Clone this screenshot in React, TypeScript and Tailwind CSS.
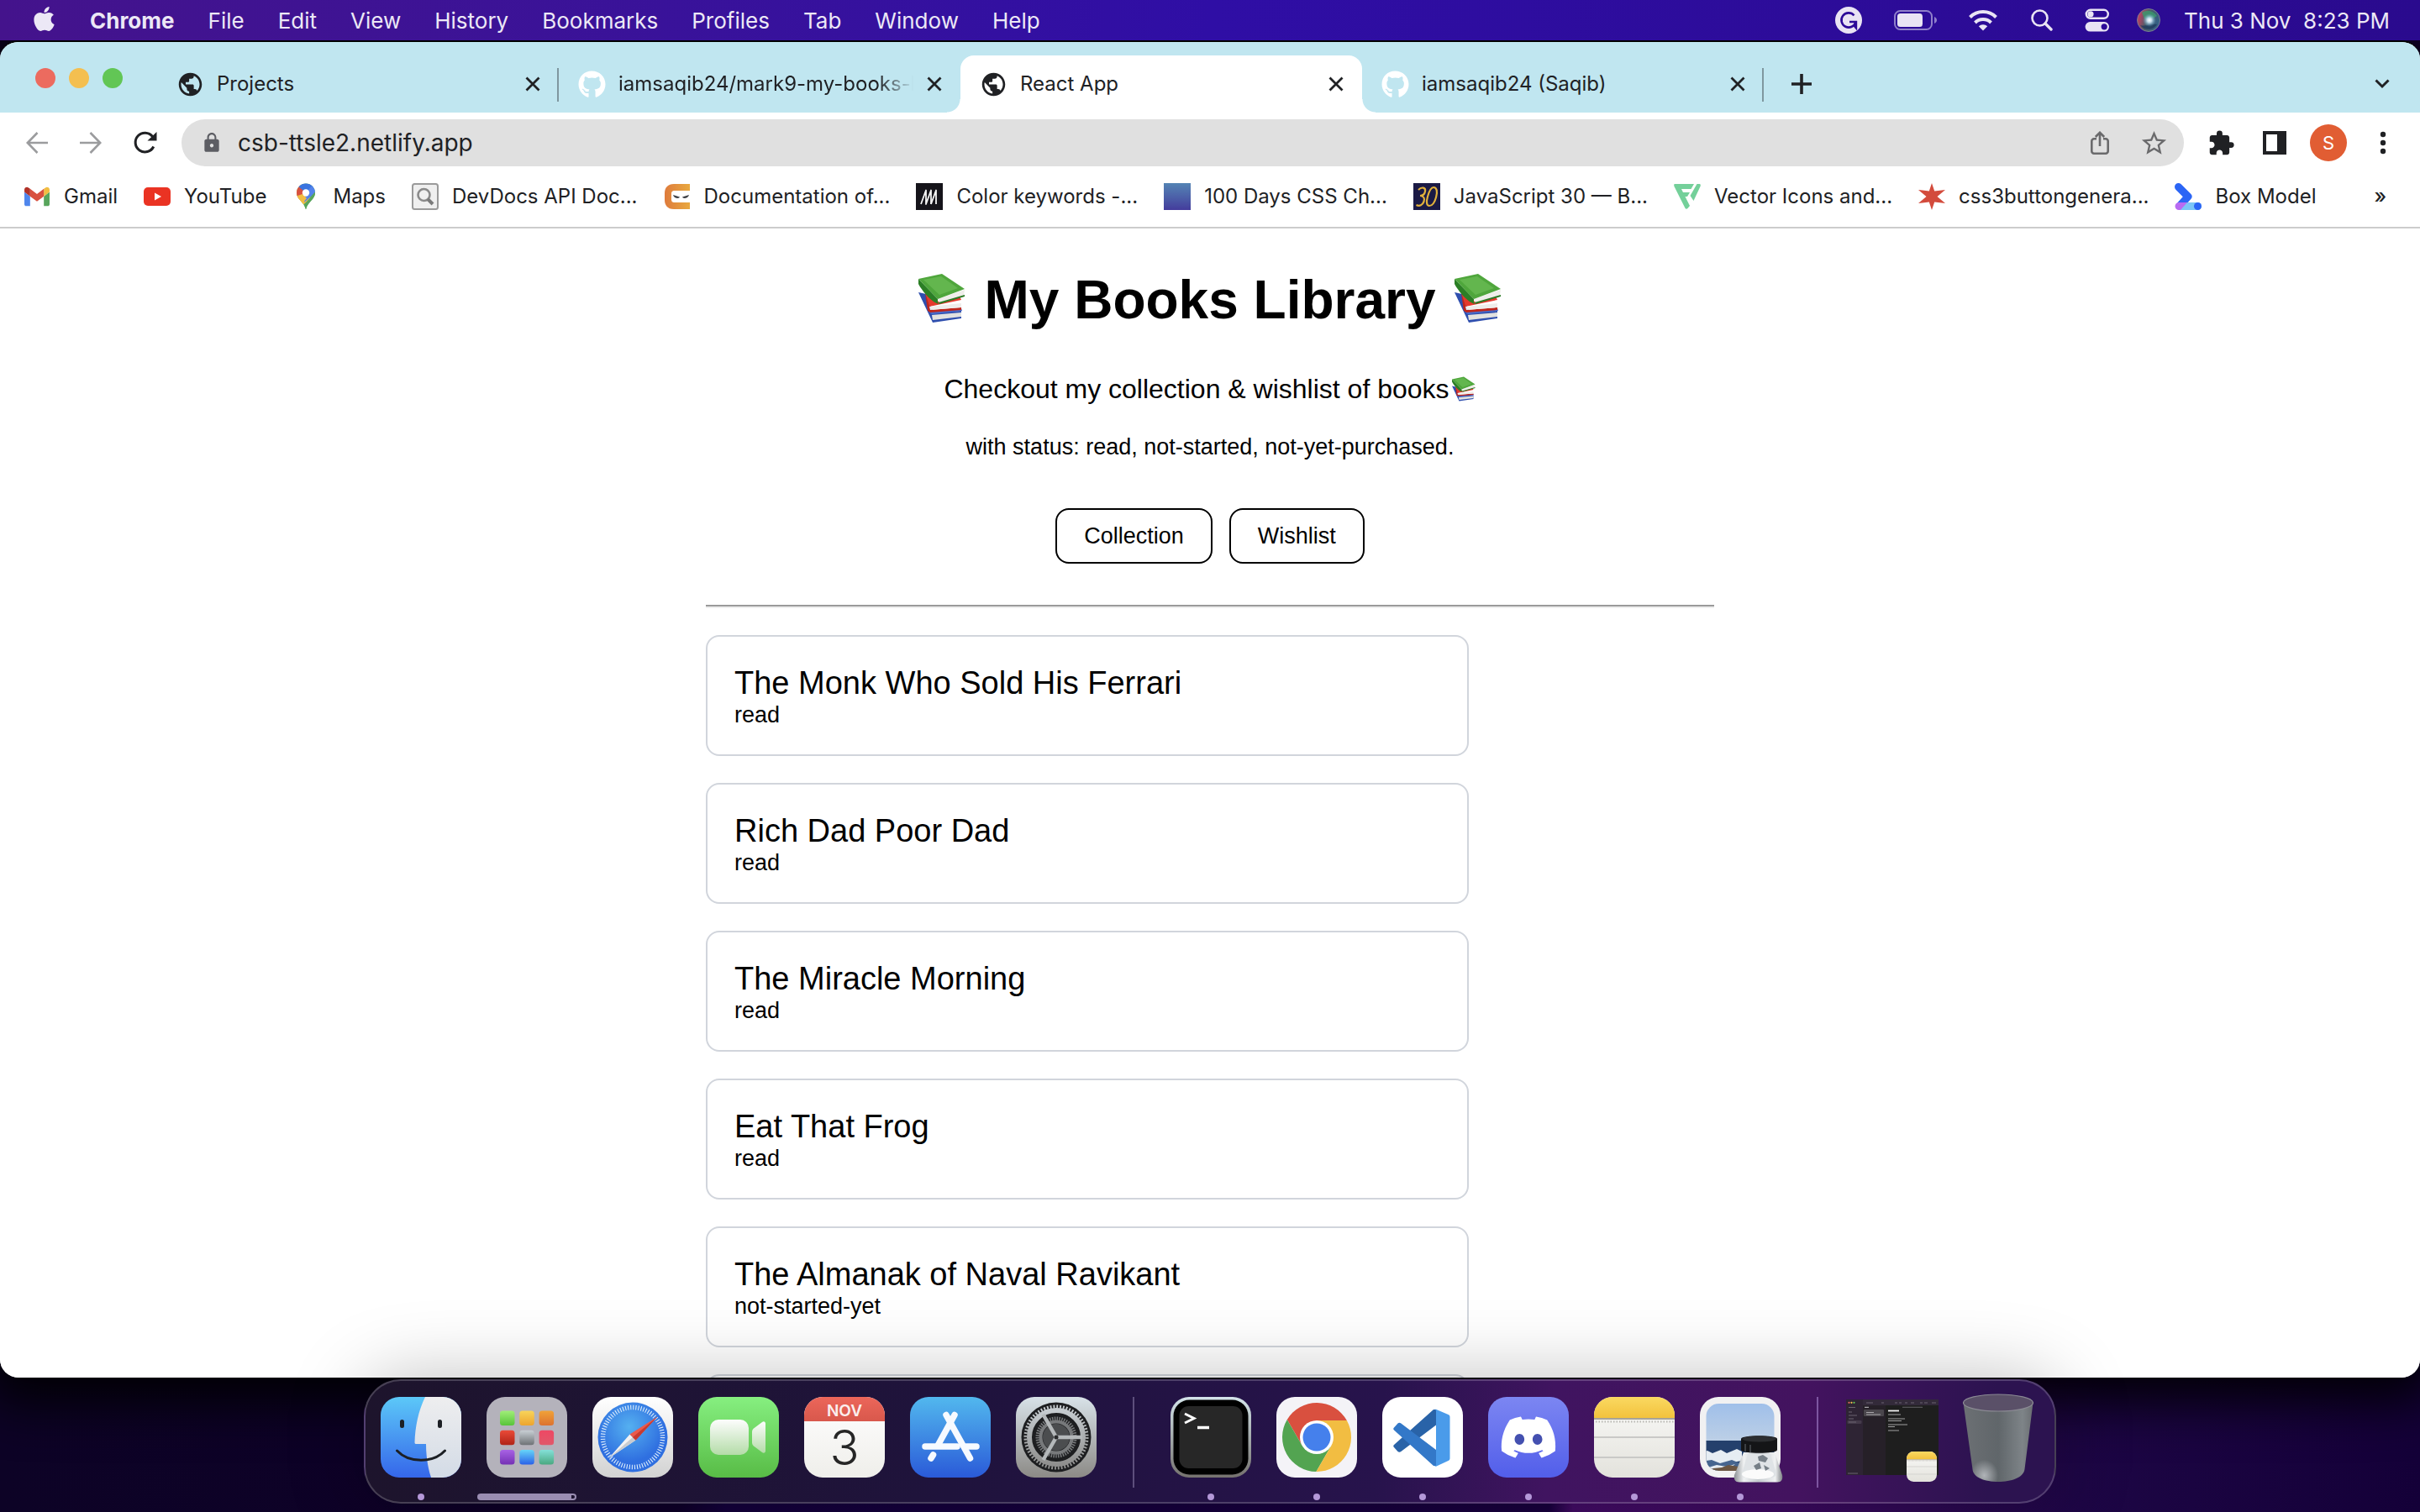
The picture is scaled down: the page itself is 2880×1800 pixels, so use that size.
import React from "react";
import { FaApple, FaDiscord, FaGithub } from "react-icons/fa";
import { MdExtension, MdLock, MdPublic, MdStarBorder } from "react-icons/md";

/* ---------- Menu bar ---------- */

const MENUS = ["File", "Edit", "View", "History", "Bookmarks", "Profiles", "Tab", "Window", "Help"];

function MenuBar() {
  return (
    <header className="relative z-10 flex h-12 shrink-0 items-center justify-between bg-linear-to-r from-[#44138c] via-[#2f0ea5] to-[#2a0a8e] pr-9 pl-10 text-[26px] text-[#ece8f6]">
      <nav aria-label="Application menu" className="flex items-center gap-10">
        <button aria-label="Apple menu" className="-ml-1 -mr-0.5 mb-1">
          <FaApple size={33} />
        </button>
        <button className="font-bold">Chrome</button>
        {MENUS.map((m) => (
          <button key={m}>{m}</button>
        ))}
      </nav>
      <div className="flex items-center">
        <svg width="32" height="32" viewBox="0 0 32 32" className="mr-[38px]">
          <circle cx="16" cy="16" r="16" fill="#e9e4f4" />
          <path d="M22.500 10.300A8.600 8.600 0 1 0 24.400 18" fill="none" stroke="#2c0b98" strokeWidth="2.600" />
          <path d="M17 18h8v7.500l-2.600-3" fill="none" stroke="#2c0b98" strokeWidth="2.400" />
        </svg>
        <svg width="52" height="24" viewBox="0 0 52 24" className="mr-9">
          <rect x="1" y="1" width="44" height="22" rx="6.500" fill="none" stroke="#8f7fca" strokeWidth="2" />
          <rect x="4" y="4" width="30" height="16" rx="3.500" fill="#e9e4f4" />
          <path d="M48 8c4 1.500 4 6.500 0 8z" fill="#8f7fca" />
        </svg>
        <svg width="36" height="26" viewBox="0 0 36 26" className="mr-[39px]" fill="none" stroke="#e9e4f4" strokeWidth="4">
          <path d="M2.500 9.500a22 22 0 0 1 31 0" />
          <path d="M8.500 16a13.500 13.500 0 0 1 19 0" />
          <path d="M18 25.500l-5.200-5.200a7.500 7.500 0 0 1 10.400 0z" fill="#e9e4f4" stroke="none" />
        </svg>
        <svg width="26" height="26" viewBox="0 0 26 26" className="mr-[38px]" fill="none" stroke="#e9e4f4">
          <circle cx="10.500" cy="10.500" r="9" strokeWidth="2.600" />
          <path d="M17 17l7 7" strokeWidth="3.400" strokeLinecap="round" />
        </svg>
        <svg width="30" height="28" viewBox="0 0 30 28" className="mr-8">
          <rect x="1.800" y="1.800" width="26" height="10" rx="5" fill="none" stroke="#e9e4f4" strokeWidth="2.400" />
          <circle cx="7" cy="6.800" r="3.600" fill="#e9e4f4" />
          <rect x=".6" y="16" width="28.400" height="11.600" rx="5.800" fill="#e9e4f4" />
          <circle cx="23.200" cy="21.800" r="3.600" fill="#2c0b98" />
        </svg>
        <svg width="28" height="28" viewBox="0 0 28 28" className="mr-7">
          <defs>
            <radialGradient id="siriCore">
              <stop offset="0" stopColor="#ffffff" />
              <stop offset=".35" stopColor="#cfe6f5" stopOpacity=".9" />
              <stop offset="1" stopColor="#5aa0c8" stopOpacity="0" />
            </radialGradient>
            <linearGradient id="siriBase" x1="0" x2="1" y1=".3" y2=".6">
              <stop offset="0" stopColor="#d43a63" />
              <stop offset=".45" stopColor="#4b5d66" />
              <stop offset="1" stopColor="#2f5f8a" />
            </linearGradient>
          </defs>
          <circle cx="14" cy="14" r="13.500" fill="url(#siriBase)" stroke="#7a7f90" />
          <path d="M6 5c6-4 13-3 18 4-5 4-12 5-15 3z" fill="#3b9a6d" opacity=".8" />
          <path d="M4 20c6 2 13-2 20-1-3 6-14 9-20 1z" fill="#1f3a5c" opacity=".8" />
          <circle cx="15" cy="14" r="8" fill="url(#siriCore)" />
        </svg>
        <time className="whitespace-pre">Thu 3 Nov  8:23 PM</time>
      </div>
    </header>
  );
}

/* ---------- Tab strip ---------- */

function Cross() {
  return (
    <svg width="18" height="18" viewBox="0 0 18 18" stroke="#202124" strokeWidth="2.800">
      <path d="M1.500 1.500l15 15M16.500 1.500l-15 15" />
    </svg>
  );
}

type TabProps = { title: string; icon: "globe" | "github"; active?: boolean; fade?: boolean; divider?: boolean };

function Tab({ title, icon, active, fade, divider }: TabProps) {
  return (
    <div
      className={
        active
          ? "relative flex h-[68px] min-w-0 max-w-[478px] flex-1 items-center rounded-t-2xl bg-white pr-[22px] pl-[23px]"
          : "relative flex h-[68px] min-w-0 max-w-[478px] flex-1 items-center pr-[22px] pl-[23px]"
      }
    >
      {active && (
        <>
          <span className="absolute bottom-0 -left-4 size-4 bg-radial-[at_0%_0%] from-[#c0e6f0] from-[15px] to-white to-[16px]" />
          <span className="absolute -right-4 bottom-0 size-4 bg-radial-[at_100%_0%] from-[#c0e6f0] from-[15px] to-white to-[16px]" />
        </>
      )}
      <button className="flex min-w-0 flex-1 items-center gap-[15px] text-left">
        <span className="shrink-0">
          {icon === "globe" ? <MdPublic size={33} color="#202124" /> : <FaGithub size={33} color="#ffffff" />}
        </span>
        <span
          className={
            fade
              ? "flex-1 overflow-hidden whitespace-nowrap mask-r-from-88% mask-r-to-100%"
              : "flex-1 overflow-hidden whitespace-nowrap"
          }
        >
          {title}
        </span>
      </button>
      <button aria-label={`Close ${title}`} className="ml-4 shrink-0">
        <Cross />
      </button>
      {divider && <span className="absolute top-[15px] right-0 h-10 w-0.5 bg-[#7f979f]" />}
    </div>
  );
}

function TabStrip() {
  return (
    <div className="flex h-[84px] shrink-0 items-end bg-[#c0e6f0] pl-[42px] text-[24px] text-[#202124]">
      <div className="mb-[29px] flex gap-4 pr-[41px]">
        <button aria-label="Close window" className="size-6 rounded-full bg-[#ec6b5f]" />
        <button aria-label="Minimize window" className="size-6 rounded-full bg-[#f4bf50]" />
        <button aria-label="Zoom window" className="size-6 rounded-full bg-[#62c655]" />
      </div>
      <Tab title="Projects" icon="globe" divider />
      <Tab title="iamsaqib24/mark9-my-books-l" icon="github" fade />
      <Tab title="React App" icon="globe" active />
      <Tab title="iamsaqib24 (Saqib)" icon="github" divider />
      <button aria-label="New tab" className="mb-[22px] ml-[33px]">
        <svg width="24" height="24" viewBox="0 0 24 24" stroke="#202124" strokeWidth="3.600">
          <path d="M12 0v24M0 12h24" />
        </svg>
      </button>
      <button aria-label="Search tabs" className="mr-9 mb-7 ml-auto">
        <svg width="18" height="12" viewBox="0 0 18 12" fill="none" stroke="#202124" strokeWidth="3">
          <path d="M1.500 1.500L9 9l7.500-7.500" />
        </svg>
      </button>
    </div>
  );
}

/* ---------- Toolbar ---------- */

function Toolbar() {
  return (
    <div className="flex h-[72px] shrink-0 items-center pr-8 pl-[31px]">
      <button aria-label="Back">
        <svg width="26" height="26" viewBox="0 0 26 26" fill="none" stroke="#9b9c9e" strokeWidth="2.600">
          <path d="M26 13H2M13.500 1L1.800 13l11.700 12" />
        </svg>
      </button>
      <button aria-label="Forward" className="ml-[38px]">
        <svg width="26" height="26" viewBox="0 0 26 26" fill="none" stroke="#9b9c9e" strokeWidth="2.600">
          <path d="M0 13h24M12.500 1l11.700 12-11.700 12" />
        </svg>
      </button>
      <button aria-label="Reload" className="mr-[29px] ml-[38px]">
        <svg width="28" height="28" viewBox="0 0 28 28">
          <path d="M23.800 18.500A11.400 11.400 0 1 1 22.500 6.500" fill="none" stroke="#202124" strokeWidth="3" />
          <path d="M27.500 1v10.500H16.500z" fill="#202124" />
        </svg>
      </button>
      <div className="flex h-14 flex-1 items-center rounded-full bg-[#e0e0e0] pr-[18px] pl-[23px]">
        <MdLock size={26} color="#5c5d63" />
        <input
          aria-label="Address and search bar"
          defaultValue="csb-ttsle2.netlify.app"
          className="ml-[18px] min-w-0 flex-1 bg-transparent text-[28px] text-[#202124] outline-none"
        />
        <button aria-label="Share">
          <svg width="22" height="28" viewBox="0 0 22 28" fill="none" stroke="#6a6a6c" strokeWidth="2.600">
            <path d="M7 9.300H4A2.700 2.700 0 0 0 1.300 12v12A2.700 2.700 0 0 0 4 26.700h14a2.700 2.700 0 0 0 2.700-2.700V12A2.700 2.700 0 0 0 18 9.300h-3M11 18V2M5.800 7L11 1.800 16.200 7" />
          </svg>
        </button>
        <button aria-label="Bookmark this page" className="ml-9">
          <MdStarBorder size={35} color="#6a6a6c" />
        </button>
      </div>
      <button aria-label="Extensions" className="ml-7">
        <MdExtension size={33} color="#202124" />
      </button>
      <button aria-label="Side panel" className="ml-[33px]">
        <svg width="28" height="28" viewBox="0 0 28 28">
          <path d="M0 0h28v28H0zM4 4v20h13V4z" fill="#202124" fillRule="evenodd" />
        </svg>
      </button>
      <button aria-label="Profile" className="ml-7 size-11 rounded-full bg-[#e15d33] text-[22px] text-white">
        S
      </button>
      <button aria-label="More options" className="ml-[31px]">
        <svg width="24" height="28" viewBox="0 0 24 28" fill="#202124">
          <circle cx="12" cy="4" r="3.200" />
          <circle cx="12" cy="14" r="3.200" />
          <circle cx="12" cy="24" r="3.200" />
        </svg>
      </button>
    </div>
  );
}

/* ---------- Bookmarks ---------- */

const ICON = "size-8 shrink-0";

function GmailIcon() {
  return (
    <svg viewBox="49 31 94 88" className={ICON}>
      <path fill="#4f86ec" d="M58 108h14V74L52 59v43c0 3.320 2.690 6 6 6" />
      <path fill="#58a55c" d="M120 108h14c3.320 0 6-2.690 6-6V59l-20 15" />
      <path fill="#f1bd42" d="M120 48v26l20-15v-8c0-7.420-8.470-11.650-14.400-7.200" />
      <path fill="#d85140" d="M72 74V48l24 18 24-18v26L96 92" />
      <path fill="#b13228" d="M52 51v8l20 15V48l-5.600-4.200c-5.940-4.450-14.400-.22-14.400 7.200" />
    </svg>
  );
}

function YouTubeIcon() {
  return (
    <svg viewBox="0 0 32 32" className={ICON}>
      <rect y="5" width="32" height="22" rx="5" fill="#ea3323" />
      <path d="M13 11.500l8 4.500-8 4.500z" fill="#fff" />
    </svg>
  );
}

function MapsIcon() {
  return (
    <svg viewBox="0 0 32 32" className={ICON}>
      <defs>
        <clipPath id="pin">
          <path d="M16 .5A11 11 0 0 0 5 11.500c0 8 8.500 10 11 20 2.500-10 11-12 11-20A11 11 0 0 0 16 .5z" />
        </clipPath>
      </defs>
      <g clipPath="url(#pin)">
        <rect width="32" height="32" fill="#58a55c" />
        <path d="M16 11.500L3 25V8h6z" fill="#f1bd42" />
        <path d="M3 22l13-10.500L23 18l-12 9z" fill="#f1bd42" />
        <path d="M16 11.500L5 20V0l5 3z" fill="#d85140" />
        <path d="M16 11.500L6 3V0h22v2z" fill="#3a74e0" />
        <path d="M16 11.500L24 2l4 0v9l-14 12z" fill="#5383ec" />
        <path d="M28 9L11 29l8 3 12-12z" fill="#58a55c" />
        <path d="M6 15l6-2 5 5-6 7-6-5z" fill="#f1bd42" />
      </g>
      <circle cx="16" cy="11.500" r="4.200" fill="#fff" />
    </svg>
  );
}

function DevDocsIcon() {
  return (
    <svg viewBox="0 0 32 32" className={ICON}>
      <rect x="1" y="1" width="30" height="30" rx="2.500" fill="#efefef" stroke="#9a9a9a" strokeWidth="2" />
      <circle cx="14.500" cy="14" r="7" fill="none" stroke="#8a8a8a" strokeWidth="2.600" />
      <path d="M19 19l6 6" stroke="#7a7a7a" strokeWidth="4" />
    </svg>
  );
}

function NinjaIcon() {
  return (
    <svg viewBox="0 0 32 32" className={ICON}>
      <defs>
        <linearGradient id="ninja">
          <stop offset="0" stopColor="#de7b3c" />
          <stop offset="1" stopColor="#e9a93f" />
        </linearGradient>
      </defs>
      <path d="M31 1v30H12C4 31 1 26 1 20v-8C1 5 5 1 12 1z" fill="url(#ninja)" />
      <path d="M32 9v14H13c-3 0-4-1-4-4v-6c0-3 1-4 4-4z" fill="#fff" />
      <path d="M11 14l8 2.500c-1 2.500-7 2-8-2.500zM30 14l-8 2.500c1 2.500 7 2 8-2.500z" fill="#3f4247" />
    </svg>
  );
}

function MdnIcon() {
  return (
    <svg viewBox="0 0 32 32" className={ICON}>
      <rect width="32" height="32" fill="#15141a" />
      <path d="M6 25L12 8.500V25L18 8.500V25" fill="none" stroke="#f4f4f4" strokeWidth="1.800" strokeLinejoin="round" />
      <path d="M18 25l6-16.500V25" fill="none" stroke="#f4f4f4" strokeWidth="1.800" strokeLinejoin="round" />
    </svg>
  );
}

function ThirtyIcon() {
  return (
    <svg viewBox="0 0 32 32" className={ICON}>
      <rect width="32" height="32" fill="#1b1a45" />
      <path d="M6 8c4-4 9-3 8 2-.6 3-3 5-6 5 4 0 6 3 4.500 7-1.500 4-5 6-9 4" fill="none" stroke="#e3b23c" strokeWidth="2.200" />
      <path d="M24 5c4 0 5 5 3 12s-5 10-8 10-4-4-2-11 4-11 7-11z" fill="none" stroke="#e3b23c" strokeWidth="2.200" />
    </svg>
  );
}

function FlatIcon() {
  return (
    <svg viewBox="0 0 32 32" className={ICON} fill="#74d09a">
      <path d="M1 1h23l-3.500 6H9l2 4h8l-3 5h-2.500l5.500 11-2.500 3c-1 1-2.500 1-3.200-.5L.5 4C0 2.500 0 1 1 1z" />
      <path d="M27.500 1h3c1.500 0 1.500 1.500 1 3l-8 17-4-6z" />
    </svg>
  );
}

function SparkIcon() {
  return (
    <svg viewBox="0 0 32 32" className={ICON}>
      <path d="M16 0l3.200 9.500L32 8l-9.500 8L32 24l-12.800-1.500L16 32l-3.200-9.500L0 24l9.500-8L0 8l12.800 1.500z" fill="#d34b3c" />
    </svg>
  );
}

function BoxIcon() {
  return (
    <svg viewBox="0 0 32 32" className={ICON} fill="none" strokeLinecap="round">
      <path d="M4.500 4.500L16 16 7 26" stroke="#2b65f5" strokeWidth="9" strokeLinejoin="round" />
      <path d="M5 23h22.500a4.500 4.500 0 0 1 0 9H5z" fill="#7cc6f7" />
      <path d="M.5 27.500A4.500 4.500 0 0 1 5 23h10L7 32H5a4.500 4.500 0 0 1-4.500-4.500z" fill="#b86bf2" />
      <circle cx="27.500" cy="27.500" r="4.500" fill="#2b65f5" />
    </svg>
  );
}

const BOOKMARKS: [string, React.ReactNode][] = [
  ["Gmail", <GmailIcon />],
  ["YouTube", <YouTubeIcon />],
  ["Maps", <MapsIcon />],
  ["DevDocs API Doc...", <DevDocsIcon />],
  ["Documentation of...", <NinjaIcon />],
  ["Color keywords -...", <MdnIcon />],
  ["100 Days CSS Ch...", <span className="size-8 shrink-0 bg-linear-to-b from-[#5484b4] to-[#443c9c]" />],
  ["JavaScript 30 — B...", <ThirtyIcon />],
  ["Vector Icons and...", <FlatIcon />],
  ["css3buttongenera...", <SparkIcon />],
  ["Box Model", <BoxIcon />],
];

function BookmarksBar() {
  return (
    <nav
      aria-label="Bookmarks"
      className="flex h-[66px] shrink-0 items-start justify-between border-b-2 border-[#cccccc] px-7 pt-2.5 text-[24px] text-[#202124]"
    >
      <div className="flex items-center gap-[31px]">
        {BOOKMARKS.map(([label, icon]) => (
          <a key={label} href="#" className="flex items-center gap-4 whitespace-nowrap">
            {icon}
            {label}
          </a>
        ))}
      </div>
      <button aria-label="More bookmarks" className="mr-3 font-medium">
        »
      </button>
    </nav>
  );
}

/* ---------- Page ---------- */

function Books({ className }: { className: string }) {
  return (
    <svg viewBox="0 0 60 60" className={className} role="img" aria-label="books">
      <path d="M2 23l9 2 9 22 33-2v9l-34 5z" fill="#2f4fae" />
      <path d="M18 50l35-3v5l-34 4z" fill="#e2e2e0" />
      <path d="M14 46l39-4 1 3-36 4z" fill="#4a6ccc" />
      <path d="M10 24l16 10 25-6 2 4-38 8z" fill="#e5392d" />
      <path d="M10 24l3 21 3 2 37-3v-3l-37 3-1-5z" fill="#bf261b" />
      <path d="M15 40l38-4v5l-37 3z" fill="#eeedea" />
      <path d="M25 31l32-11-1 7-29 9z" fill="#efeeea" />
      <path d="M26 35l31-9v2l-30 9z" fill="#2b7a24" />
      <path d="M2 7L30 1l27 18-32 12z" fill="#4fa63c" />
      <path d="M2 7l23 24v3l1 3C16 34 5 19 2 13z" fill="#2b7f25" />
      <path d="M8 8l21-4 20 14-22 8z" fill="#63b64e" />
    </svg>
  );
}

const LIBRARY = [
  { title: "The Monk Who Sold His Ferrari", status: "read" },
  { title: "Rich Dad Poor Dad", status: "read" },
  { title: "The Miracle Morning", status: "read" },
  { title: "Eat That Frog", status: "read" },
  { title: "The Almanak of Naval Ravikant", status: "not-started-yet" },
];

function LibraryPage() {
  return (
    <main className="min-h-0 flex-1 overflow-hidden bg-white pt-12 font-['Liberation_Sans',Arial,sans-serif] text-black">
      <div className="mx-auto max-w-[1200px]">
        <h1 className="flex items-center justify-center gap-5 text-[64px] leading-[74px] font-bold">
          <Books className="-mt-1 size-[60px]" />
          My Books Library
          <Books className="-mt-1 size-[60px]" />
        </h1>
        <p className="mt-[51px] flex items-center justify-center gap-0.5 text-[32px] leading-9">
          Checkout my collection &amp; wishlist of books
          <Books className="size-[30px]" />
        </p>
        <p className="mt-9 text-center text-[27px] leading-[30px]">with status: read, not-started, not-yet-purchased.</p>
        <div className="mt-[58px] flex justify-center gap-5 text-[27px] leading-[30px]">
          <button className="rounded-2xl border-2 border-black px-8 py-4">Collection</button>
          <button className="rounded-2xl border-2 border-black px-8 py-4">Wishlist</button>
        </div>
        <hr className="mt-[49px] border-t-2 border-b-2 border-t-[#9a9a9a] border-b-[#eeeeee]" />
        <ul className="mt-8 flex max-w-[908px] flex-col gap-8">
          {LIBRARY.map((b) => (
            <li key={b.title} className="rounded-2xl border-2 border-gray-300 p-8">
              <div className="text-[38px] leading-[46px]">{b.title}</div>
              <div className="text-[27px] leading-[30px]">{b.status}</div>
            </li>
          ))}
          <li className="h-36 rounded-2xl border-2 border-gray-300" />
        </ul>
      </div>
    </main>
  );
}

/* ---------- Dock ---------- */

const TILE = "block size-24 overflow-visible";

function Grad({ id, from, to }: { id: string; from: string; to: string }) {
  return (
    <linearGradient id={id} x1="0" y1="0" x2="0" y2="1">
      <stop offset="0" stopColor={from} />
      <stop offset="1" stopColor={to} />
    </linearGradient>
  );
}

function Finder() {
  return (
    <svg viewBox="0 0 96 96" className={TILE}>
      <defs>
        <Grad id="fnB" from="#5cc8f8" to="#3566ea" />
        <Grad id="fnW" from="#eeeeef" to="#d3dbe6" />
        <clipPath id="fnC">
          <rect width="96" height="96" rx="22" />
        </clipPath>
      </defs>
      <g clipPath="url(#fnC)">
        <rect width="96" height="96" fill="url(#fnB)" />
        <path d="M53 0C45 16 41 36 40.500 54c0 1.500.5 2 2 2H54c0 14 2 28 6 40h36V0z" fill="url(#fnW)" />
      </g>
      <g stroke="#1c1f24" strokeLinecap="round" fill="none">
        <path d="M25.500 29.500v5M70.500 29.500v5" strokeWidth="5" />
        <path d="M19.500 64c14 15 43 15 57 0" strokeWidth="3" />
      </g>
    </svg>
  );
}

const PADS: [string, string][] = [
  ["#a0ee78", "#58c43a"],
  ["#f8d45a", "#eda42e"],
  ["#f0a238", "#dc7230"],
  ["#ea4a38", "#b02418"],
  ["#c8cfd4", "#6e7276"],
  ["#ee4864", "#e0586a"],
  ["#a862e4", "#7430b4"],
  ["#66d4f8", "#2a60e8"],
  ["#84e0d8", "#4aa880"],
];

function Launchpad() {
  return (
    <svg viewBox="0 0 96 96" className={TILE}>
      <rect width="96" height="96" rx="22" fill="#b4b2bb" />
      {PADS.map(([from, to], i) => (
        <g key={from}>
          <defs>
            <Grad id={`pad${i}`} from={from} to={to} />
          </defs>
          <rect x={16 + (i % 3) * 23.3} y={16.5 + Math.floor(i / 3) * 23.3} width="17.500" height="17.500" rx="3.500" fill={`url(#pad${i})`} />
        </g>
      ))}
    </svg>
  );
}

function Safari() {
  return (
    <svg viewBox="0 0 96 96" className={TILE}>
      <defs>
        <Grad id="sfW" from="#ffffff" to="#d2d2d2" />
        <radialGradient id="sfB" cx=".45" cy=".35">
          <stop offset="0" stopColor="#55b0f0" />
          <stop offset="1" stopColor="#2f6fe0" />
        </radialGradient>
      </defs>
      <rect width="96" height="96" rx="22" fill="url(#sfW)" />
      <circle cx="48" cy="48" r="41.500" fill="url(#sfB)" />
      <circle cx="48" cy="48" r="35.500" fill="none" stroke="#dcecfb" strokeWidth="5.500" strokeDasharray="1.100 1.998" />
      <path d="M19.500 73L44.500 44.500l7 7z" fill="#f3f3f3" />
      <path d="M19.500 73l28.500-25 3.500 3.500z" fill="#c9ccd0" />
      <path d="M77.500 23.500L51.500 51.500l-7-7z" fill="#ea5a4c" />
      <path d="M77.500 23.500L51.500 51.500 48 48z" fill="#c73a30" />
    </svg>
  );
}

function FaceTime() {
  return (
    <svg viewBox="0 0 96 96" className={TILE}>
      <defs>
        <Grad id="ftB" from="#86ef80" to="#58bc46" />
        <Grad id="ftW" from="#fdfdfd" to="#b4dca8" />
      </defs>
      <rect width="96" height="96" rx="22" fill="url(#ftB)" />
      <rect x="14" y="27" width="46" height="42" rx="10" fill="url(#ftW)" />
      <path d="M64 42c0-2 .5-3 2-4.500l10-7.500c2-1.500 4-.5 4 2v32c0 2.500-2 3.500-4 2l-10-7.500c-1.500-1.500-2-2.500-2-4.500z" fill="url(#ftW)" />
    </svg>
  );
}

function Calendar() {
  return (
    <svg viewBox="0 0 96 96" className={TILE}>
      <defs>
        <Grad id="clR" from="#ec665a" to="#d8584c" />
        <Grad id="clW" from="#ffffff" to="#efeeea" />
        <clipPath id="clC">
          <rect width="96" height="96" rx="22" />
        </clipPath>
      </defs>
      <g clipPath="url(#clC)">
        <rect width="96" height="96" fill="url(#clW)" />
        <rect width="96" height="29" fill="url(#clR)" />
      </g>
      <text x="48" y="23" textAnchor="middle" fontSize="19" fontWeight="600" fill="#fbeeed">
        NOV
      </text>
      <text x="48" y="81" textAnchor="middle" fontSize="58" fontWeight="300" fill="#262626">
        3
      </text>
    </svg>
  );
}

function AppStore() {
  return (
    <svg viewBox="0 0 96 96" className={TILE}>
      <defs>
        <Grad id="asB" from="#52b8ee" to="#2a5ad8" />
      </defs>
      <rect width="96" height="96" rx="22" fill="url(#asB)" />
      <g stroke="#f6faff" strokeWidth="7.500" strokeLinecap="round">
        <path d="M43 21.500L71.500 73" />
        <path d="M53 21.500L33.500 57" />
        <path d="M18 59h38M67 59h12" />
        <path d="M27.500 69L25 73" />
      </g>
    </svg>
  );
}

function Settings() {
  return (
    <svg viewBox="0 0 96 96" className={TILE}>
      <defs>
        <Grad id="stB" from="#d8e2e8" to="#8c8a86" />
        <Grad id="stM" from="#c6ccd0" to="#8f8f8e" />
      </defs>
      <rect width="96" height="96" rx="22" fill="url(#stB)" />
      <circle cx="48" cy="48" r="41.500" fill="#1d1e20" />
      <g fill="none" stroke="url(#stM)">
        <circle cx="48" cy="48" r="36.500" strokeWidth="4" strokeDasharray="1.900 1.922" />
        <circle cx="48" cy="48" r="32" strokeWidth="6" />
        <circle cx="48" cy="48" r="22" strokeWidth="5" stroke="#77797b" strokeDasharray="1.500 1.300" />
        <circle cx="48" cy="48" r="18.500" strokeWidth="4" stroke="#77797b" />
      </g>
      <circle cx="48" cy="48" r="16" fill="#4b4d4f" />
      <g stroke="#b4b8ba" strokeWidth="4.500">
        <path d="M48 48h31M48 48L32.500 21M48 48L32.500 75" />
      </g>
      <circle cx="48" cy="48" r="2.500" fill="#2a2b2d" />
    </svg>
  );
}

function Terminal() {
  return (
    <svg viewBox="0 0 96 96" className={TILE}>
      <defs>
        <Grad id="tmB" from="#d4e4ea" to="#75726e" />
      </defs>
      <rect width="96" height="96" rx="22" fill="url(#tmB)" />
      <rect x="3.500" y="3.500" width="89" height="89" rx="19" fill="#000" />
      <rect x="10.500" y="11" width="75" height="74" rx="11" fill="#272727" />
      <path d="M17 20l11 5.500L17 31" fill="none" stroke="#fff" strokeWidth="3" />
      <path d="M32 36.500h14" stroke="#fff" strokeWidth="3.500" />
    </svg>
  );
}

function Chrome() {
  return (
    <svg viewBox="0 0 96 96" className={TILE}>
      <rect width="96" height="96" rx="22" fill="#f4f3f7" />
      <g transform="translate(48 48)">
        <path d="M35.800-20L0-20-17.300 10-35.200-21A41 41 0 0 1 35.800-20z" fill="#d9503f" />
        <path d="M-35.200-21L-17.300 10 17.300 10-.6 41A41 41 0 0 1-35.200-21z" fill="#53a451" />
        <path d="M-.6 41L17.300 10 0-20H35.800A41 41 0 0 1-.6 41z" fill="#f2bd42" />
        <circle r="20" fill="#fff" />
        <circle r="16.500" fill="#4580ec" />
      </g>
    </svg>
  );
}

function VSCode() {
  return (
    <svg viewBox="0 0 96 96" className={TILE}>
      <rect width="96" height="96" rx="22" fill="#fff" />
      <path d="M61 15L14 57c-1 1-1 2 0 3l4.500 5c1 1 2.500 1 3.500.3L64 33.500V15z" fill="#2963a8" />
      <path d="M61 82L14 39.500c-1-1-1-2 0-3l4.500-5c1-1 2.500-1 3.500-.3L64 63v19z" fill="#3378c8" />
      <path d="M61.500 15.500c1-1 2-1 3-.5l14 6c1.500.7 2 1.500 2 3v49c0 1.500-.5 2.300-2 3l-14 6.500c-1 .5-2 .3-3-.5 1.300.8 2.500 0 2.500-1.500V17c0-1.500-1.200-2.500-2.500-1.500z" fill="#4a9bea" />
    </svg>
  );
}

function Discord() {
  return (
    <svg viewBox="0 0 96 96" className={TILE}>
      <defs>
        <Grad id="dcB" from="#7c86f2" to="#525eea" />
      </defs>
      <rect width="96" height="96" rx="22" fill="url(#dcB)" />
      <ellipse cx="37" cy="50" rx="8" ry="8.500" fill="#4450b0" />
      <ellipse cx="60" cy="50" rx="8" ry="8.500" fill="#4450b0" />
      <FaDiscord x={13} y={13} size={70} color="#ffffff" />
    </svg>
  );
}

function Notes({ id, className }: { id: string; className: string }) {
  return (
    <svg viewBox="0 0 96 96" className={className}>
      <defs>
        <Grad id={`${id}Y`} from="#fad962" to="#f3c23c" />
        <Grad id={`${id}W`} from="#fafaf8" to="#e3e2dc" />
        <clipPath id={`${id}C`}>
          <rect width="96" height="96" rx="22" />
        </clipPath>
      </defs>
      <g clipPath={`url(#${id}C)`}>
        <rect width="96" height="96" fill={`url(#${id}W)`} />
        <rect width="96" height="25" fill={`url(#${id}Y)`} />
        <path d="M0 26h96" stroke="#a8a398" strokeWidth="2" />
        <path d="M2 29.500h94" stroke="#b8b7b2" strokeWidth="2" strokeDasharray="1.500 2" />
        <path d="M0 48h96M0 72h96" stroke="#c9c9c7" strokeWidth="1.800" />
      </g>
    </svg>
  );
}

function Preview() {
  return (
    <svg viewBox="0 0 96 96" className={TILE}>
      <defs>
        <Grad id="pvS" from="#9abcea" to="#bdd0e6" />
        <linearGradient id="pvG">
          <stop offset="0" stopColor="#8b9094" />
          <stop offset=".2" stopColor="#f0f2f3" />
          <stop offset=".5" stopColor="#c4cace" />
          <stop offset=".85" stopColor="#f0f2f3" />
          <stop offset="1" stopColor="#7c8084" />
        </linearGradient>
        <clipPath id="pvC">
          <rect x="7.500" y="8" width="81" height="80" rx="15" />
        </clipPath>
      </defs>
      <rect width="96" height="96" rx="22" fill="#f1f1f2" />
      <g clipPath="url(#pvC)">
        <rect width="96" height="53" fill="url(#pvS)" />
        <rect y="52" width="96" height="44" fill="#24406c" />
        <path d="M0 66l9-2 6 3 10-4 7 4 12-5 6 3v11l-12 2-10 5-14-4-14 4z" fill="#e6edf3" />
        <path d="M0 77l14-2 10 4 14-4 10 4v9H0z" fill="#46658f" />
        <path d="M10 84l10-3 12 2 10-3-8 6-14 2z" fill="#e6edf3" />
        <path d="M10 88l6-3 10-1 8-3 12 2v8H8z" fill="#6b5643" />
      </g>
      <path d="M52 66h37l9 27c1 5-1 8.500-6 8.500H47c-5 0-7-3.500-6-8.500z" fill="url(#pvG)" />
      <path d="M57 68h27l7 23c0 3-3 5-7 5H55c-4 0-6-2-5-5z" fill="#dfe3e6" />
      <ellipse cx="69" cy="92" rx="19" ry="6" fill="#fbfbfb" />
      <path d="M69 71l6-2 6 4-3 5-8-2zM64 82l7-4 2 7-6 2zM76 81l7 4-5 3z" fill="#767f87" />
      <path d="M49 50c0-5 43-5 43 0v13c0 5-43 5-43 0z" fill="#141517" />
      <ellipse cx="70.500" cy="50" rx="20" ry="3.500" fill="#2c2e31" />
      <path d="M54 56v9M60 57v9" stroke="#3c3f43" strokeWidth="2" />
    </svg>
  );
}

function MinimizedNotes() {
  return (
    <svg viewBox="0 0 110 90" className="block h-[90px] w-[110px]">
      <rect width="110" height="90" fill="#1e1e1e" />
      <rect width="20" height="90" fill="#2e2434" />
      <rect x="20" width="27" height="90" fill="#262028" />
      <rect x="20" width="90" height="7" fill="#332a3a" />
      <circle cx="3.500" cy="3.800" r="1.100" fill="#ec6b5f" />
      <circle cx="6.500" cy="3.800" r="1.100" fill="#f4bf50" />
      <circle cx="9.500" cy="3.800" r="1.100" fill="#62c655" />
      <rect x="21" y="12" width="24" height="8" rx="1" fill="#4a464c" />
      <rect x="1.500" y="25" width="17" height="4" rx="1" fill="#443a4a" />
      <g strokeWidth="1.200">
        <path d="M24 15.500h9M24 18h17M22 9.300h5" stroke="#a8a6aa" />
        <path d="M3 9.500h8M3 15h4M3 19h10M3 23h6M3 27h9M2 88h12M24 4h8M42 4h3M58 4h3M63 4h3M70 4h3M77 4h4M88 4h3M93 4h4M102 4h5" stroke="#6a6270" />
        <path d="M67 9.300h24" stroke="#5a585c" />
        <path d="M50 13.500h13" stroke="#f0f0f0" strokeWidth="1.800" />
        <path d="M50 18h15M50 23h20M50 25.500h16M50 30h23M50 32.500h8M50 37h13" stroke="#a0a0a0" />
      </g>
    </svg>
  );
}

function Trash() {
  return (
    <svg viewBox="0 0 84 106" className="block h-[106px] w-[84px]">
      <defs>
        <linearGradient id="trB">
          <stop offset="0" stopColor="#6c7074" />
          <stop offset=".5" stopColor="#60666a" />
          <stop offset=".85" stopColor="#7e8488" />
          <stop offset="1" stopColor="#6a6e72" />
        </linearGradient>
        <radialGradient id="trG" cx=".3" cy=".92" r=".2">
          <stop offset="0" stopColor="#b0b4b8" />
          <stop offset="1" stopColor="#b0b4b8" stopOpacity="0" />
        </radialGradient>
      </defs>
      <path d="M.5 11l11 79c1 20 60 20 62 0l10-79z" fill="url(#trB)" />
      <path d="M.5 11l11 79c1 20 60 20 62 0l10-79z" fill="url(#trG)" />
      <ellipse cx="42" cy="11" rx="41.500" ry="10" fill="#5a5068" stroke="#8b8a94" strokeWidth="1.200" />
    </svg>
  );
}

type AppProps = { name: string; running?: boolean; children: React.ReactNode };

function DockApp({ name, running, children }: AppProps) {
  return (
    <button aria-label={name} className="flex w-24 flex-col items-center">
      {children}
      {running && <span className="mt-[19px] size-2 rounded-full bg-[#b498d8]" />}
    </button>
  );
}

function Dock() {
  return (
    <footer className="relative z-10 flex h-40 shrink-0 justify-center pt-0.5 pb-2.5">
      <nav
        aria-label="Dock"
        className="flex items-start gap-[30px] rounded-[44px] border-2 border-[#ffffff30] bg-[linear-gradient(95deg,#1d142c_0%,#1f133c_35%,#27134c_60%,#401460_70%,#43135f_85%,#2c1350_96%)] pt-[19px] pr-[25px] pl-[18px] shadow-[0_0_90px_0_rgba(0,0,0,0.26)]"
      >
        <DockApp name="Finder" running>
          <Finder />
        </DockApp>
        <button aria-label="Launchpad" className="flex w-24 flex-col items-center">
          <Launchpad />
          <span className="-mx-3 mt-[19px] flex h-2 w-[118px] justify-end rounded-full bg-[#9a8db2] p-0.5">
            <span className="size-1 rounded-r-full bg-[#1d1430]" />
          </span>
        </button>
        <DockApp name="Safari">
          <Safari />
        </DockApp>
        <DockApp name="FaceTime">
          <FaceTime />
        </DockApp>
        <DockApp name="Calendar">
          <Calendar />
        </DockApp>
        <DockApp name="App Store">
          <AppStore />
        </DockApp>
        <DockApp name="System Preferences">
          <Settings />
        </DockApp>
        <span className="mx-[13px] h-27 w-0.5 bg-[#5d4f7c]" />
        <DockApp name="Terminal" running>
          <Terminal />
        </DockApp>
        <DockApp name="Google Chrome" running>
          <Chrome />
        </DockApp>
        <DockApp name="Visual Studio Code" running>
          <VSCode />
        </DockApp>
        <DockApp name="Discord" running>
          <Discord />
        </DockApp>
        <DockApp name="Notes" running>
          <Notes id="notes" className={TILE} />
        </DockApp>
        <DockApp name="Preview" running>
          <Preview />
        </DockApp>
        <span className="mx-[13px] h-27 w-0.5 bg-[#7d55a0]" />
        <button aria-label="Minimized Notes window" className="relative mt-[3px] -ml-2.5">
          <MinimizedNotes />
          <Notes id="mini" className="absolute -bottom-2 left-[72px] size-9" />
        </button>
        <button aria-label="Trash" className="-mt-1 -ml-px">
          <Trash />
        </button>
      </nav>
    </footer>
  );
}

export default function App() {
  return (
    <div className="flex h-screen w-full flex-col overflow-hidden bg-[linear-gradient(90deg,#0d0326_0%,#0e0028_28%,#14003c_30%,#18003e_64%,#430c66_65%,#3c0a60_74%,#1d0645_86%,#140038_100%)] font-[Inter,'Liberation_Sans',sans-serif]">
      <MenuBar />
      <div className="flex min-h-0 flex-1 flex-col overflow-hidden rounded-[22px] border-t-2 border-black bg-white shadow-[0_10px_60px_20px_rgba(0,0,0,0.9)]">
        <TabStrip />
        <Toolbar />
        <BookmarksBar />
        <LibraryPage />
      </div>
      <Dock />
    </div>
  );
}
